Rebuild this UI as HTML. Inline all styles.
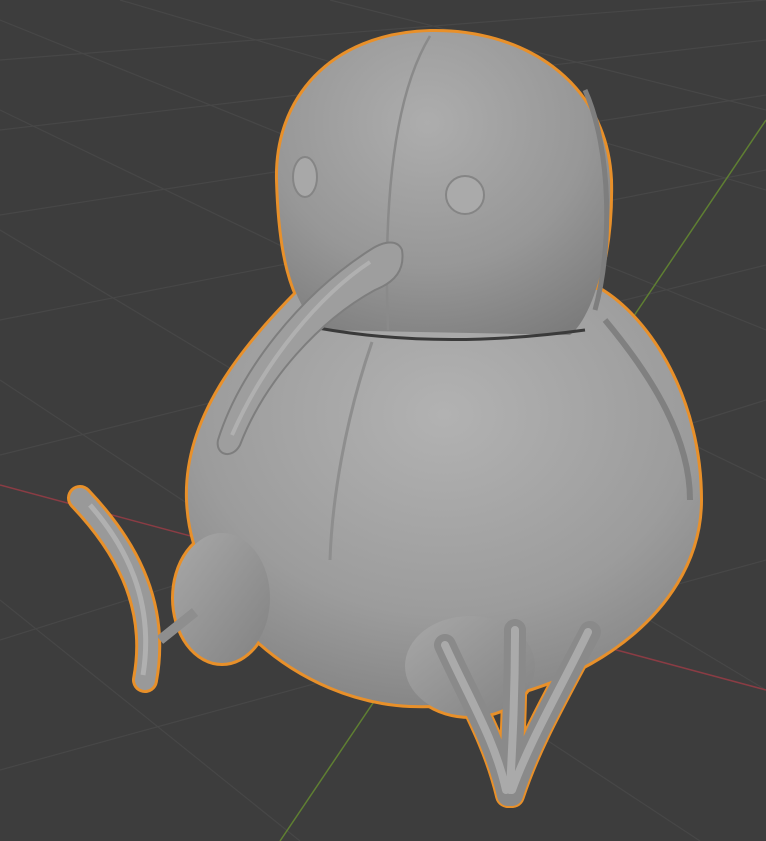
<!DOCTYPE html>
<html><head><meta charset="utf-8"><style>
html,body{margin:0;padding:0;background:#3d3d3d;overflow:hidden}
svg{display:block}
</style></head><body>
<svg width="766" height="841" viewBox="0 0 766 841" xmlns="http://www.w3.org/2000/svg">
<defs>
<radialGradient id="body" cx="0.5" cy="0.3" r="0.8">
<stop offset="0" stop-color="#b2b2b2"/><stop offset="0.6" stop-color="#9c9c9c"/><stop offset="1" stop-color="#7e7e7e"/>
</radialGradient>
<radialGradient id="head" cx="0.45" cy="0.3" r="0.8">
<stop offset="0" stop-color="#adadad"/><stop offset="0.6" stop-color="#979797"/><stop offset="1" stop-color="#7c7c7c"/>
</radialGradient>
<linearGradient id="part" x1="0" y1="0" x2="1" y2="1">
<stop offset="0" stop-color="#a8a8a8"/><stop offset="1" stop-color="#828282"/>
</linearGradient>
</defs>
<rect width="766" height="841" fill="#3d3d3d"/>
<g stroke="#474747" stroke-width="1.2" fill="none">
<line x1="0" y1="60" x2="766" y2="0"/>
<line x1="0" y1="130" x2="766" y2="40"/>
<line x1="0" y1="215" x2="766" y2="95"/>
<line x1="0" y1="320" x2="766" y2="170"/>
<line x1="0" y1="455" x2="766" y2="265"/>
<line x1="0" y1="640" x2="766" y2="400"/>
<line x1="0" y1="20" x2="766" y2="330"/>
<line x1="0" y1="110" x2="766" y2="480"/>
<line x1="0" y1="230" x2="766" y2="690"/>
<line x1="0" y1="380" x2="700" y2="841"/>
<line x1="0" y1="600" x2="300" y2="841"/>
<line x1="120" y1="0" x2="766" y2="190"/>
<line x1="330" y1="0" x2="766" y2="110"/>
<line x1="0" y1="770" x2="766" y2="560"/>
</g>
<line x1="0" y1="485" x2="766" y2="690" stroke="#8a3c44" stroke-width="1.5"/>
<line x1="280" y1="841" x2="766" y2="120" stroke="#5f7f32" stroke-width="1.5"/>

<g fill="#e8902a" stroke="#e8902a" stroke-width="6">
<path d="M300,290 C240,350 185,420 188,500 C192,610 300,700 410,705 C560,710 700,620 700,500 C700,400 650,320 600,290 Z"/>
<path d="M430,32 C520,30 605,80 610,180 C612,260 590,320 570,335 L320,330 C290,300 280,250 278,180 C276,100 330,35 430,32 Z"/>
<ellipse cx="222" cy="598" rx="48" ry="65"/>
<ellipse cx="470" cy="666" rx="65" ry="50"/>
</g>
<g fill="none" stroke="#e8902a" stroke-width="26" stroke-linecap="round">
<path d="M80,498 C120,540 160,600 145,680"/>
<path d="M445,645 C470,700 495,740 508,795 M515,630 C515,700 512,750 510,795 M590,632 C560,690 530,740 512,795"/>
</g>

<path d="M300,290 C240,350 185,420 188,500 C192,610 300,700 410,705 C560,710 700,620 700,500 C700,400 650,320 600,290 Z" fill="url(#body)"/>
<ellipse cx="222" cy="598" rx="48" ry="65" fill="url(#part)"/>
<ellipse cx="470" cy="666" rx="65" ry="50" fill="url(#part)"/>
<path d="M195,612 L160,640" stroke="#8e8e8e" stroke-width="10"/>
<path d="M80,498 C120,540 160,600 145,680" fill="none" stroke="#999" stroke-width="20" stroke-linecap="round"/>
<path d="M90,505 C125,545 155,600 143,675" stroke="#b0b0b0" stroke-width="5" fill="none"/>
<path d="M430,32 C520,30 605,80 610,180 C612,260 590,320 570,335 L320,330 C290,300 280,250 278,180 C276,100 330,35 430,32 Z" fill="url(#head)"/>
<path d="M318,328 Q440,350 585,330" stroke="#3a3a3a" stroke-width="3" fill="none"/>
<path d="M430,36 C385,110 385,250 388,330" stroke="#8a8a8a" stroke-width="2.5" fill="none"/>
<path d="M585,90 C612,150 612,250 595,310" stroke="#7e7e7e" stroke-width="5" fill="none"/>
<path d="M372,342 C345,420 332,500 330,560" stroke="#8e8e8e" stroke-width="3" fill="none"/>
<path d="M605,320 C655,380 690,440 690,500" stroke="#808080" stroke-width="6" fill="none"/>
<!-- beak -->
<path d="M402,250 C405,270 395,282 375,290 C320,320 265,380 240,445 C232,460 215,455 218,440 C240,370 300,295 370,250 C385,240 398,240 402,250 Z" fill="#9e9e9e" stroke="#7e7e7e" stroke-width="2"/>
<path d="M370,262 C320,295 265,360 232,435" stroke="#b0b0b0" stroke-width="4" fill="none"/>
<!-- eyes -->
<ellipse cx="305" cy="177" rx="12" ry="20" fill="#a8a8a8" stroke="#858585" stroke-width="2"/>
<circle cx="465" cy="195" r="19" fill="#aaaaaa" stroke="#858585" stroke-width="2"/>
<!-- toes -->
<g fill="none" stroke="#8a8a8a" stroke-width="22" stroke-linecap="round">
<path d="M445,645 C470,700 495,740 508,795 M515,630 C515,700 512,750 510,795 M590,632 C560,690 530,740 512,795"/>
</g>
<g fill="none" stroke="#aaa" stroke-width="8" stroke-linecap="round">
<path d="M445,645 C470,700 495,740 506,790 M515,630 C515,700 512,750 510,790 M588,632 C560,690 530,740 512,790"/>
</g>
</svg>
</body></html>
